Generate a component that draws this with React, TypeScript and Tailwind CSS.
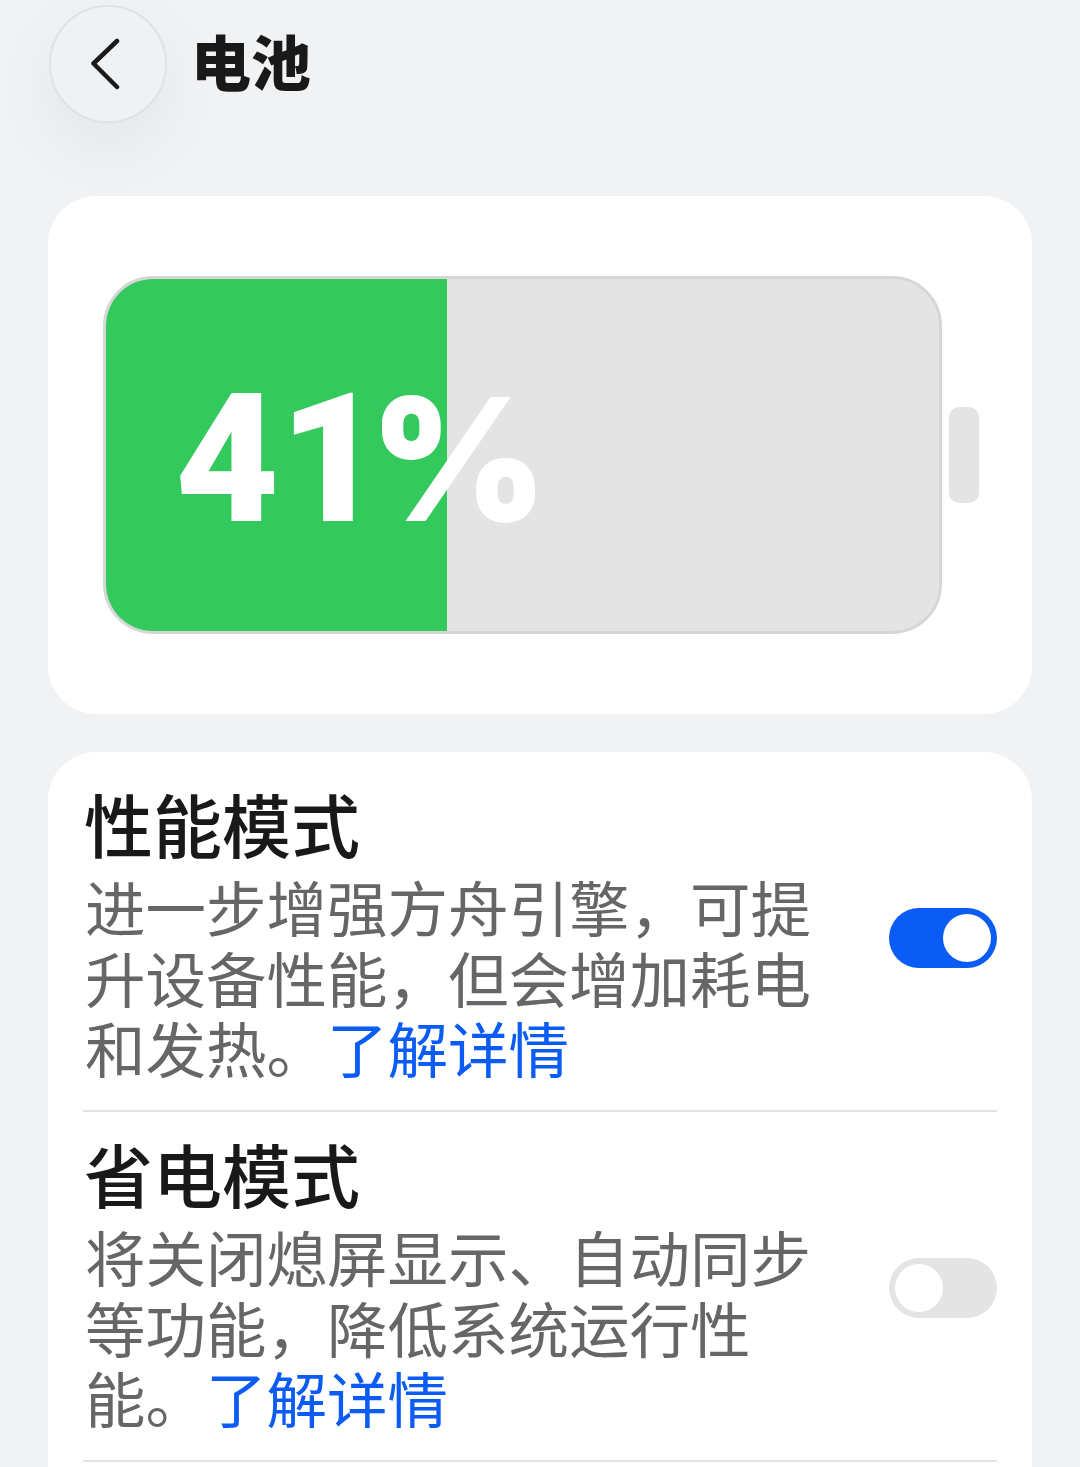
import React from "react";

const cjk = { fontFamily: '"Noto Sans CJK SC", "Noto Sans", sans-serif' };

function Toggle({ on }: { on: boolean }) {
  return (
    <div
      className={`mt-[3px] flex h-[60px] w-[108px] shrink-0 items-center rounded-full px-[6px] ${
        on ? "justify-end bg-[#0a5cf5]" : "justify-start bg-[#e4e4e4]"
      }`}
    >
      <div className="h-[48px] w-[48px] rounded-full bg-white" />
    </div>
  );
}

function SettingRow({
  title,
  text,
  on,
}: {
  title: string;
  text: string;
  on: boolean;
}) {
  return (
    <div className="flex h-[350px] items-center justify-between border-b-2 border-[#e2e3e5] pl-[2px]">
      <div className="w-[734px]">
        <h2 className="-ml-[1px] h-[70px] text-[69px] leading-[68px] font-medium text-[#191919]">
          {title}
        </h2>
        <p className="mt-[12px] text-[60.5px] leading-[70.5px] text-[#666666]">
          {text}
          <span className="text-[#0a5cf5]">了解详情</span>
        </p>
      </div>
      <Toggle on={on} />
    </div>
  );
}

export default function App() {
  return (
    <div
      className="h-[1467px] w-[1080px] overflow-hidden bg-[#f1f2f4]"
      style={cjk}
    >
      {/* Header */}
      <div className="flex items-center gap-[24px] pt-[5px] pl-[49px]">
        <button className="flex h-[118px] w-[118px] items-center justify-center rounded-full border-2 border-[#dfe2e6] bg-[#eff2f5] shadow-[0_24px_70px_rgba(0,0,0,0.06)]">
          <svg width="32" height="52" viewBox="0 0 32 52" className="mr-[6px]">
            <path
              d="M28 3 L4.5 25.5 L28 49"
              fill="none"
              stroke="#1a1a1a"
              strokeWidth="4.5"
              strokeLinecap="round"
              strokeLinejoin="round"
            />
          </svg>
        </button>
        <h1 className="mb-[8px] text-[60px] leading-[70px] font-black text-[#191919]">电池</h1>
      </div>

      {/* Battery card */}
      <div className="mx-[48px] mt-[73px] flex h-[518px] items-center gap-[7px] rounded-[48px] bg-white pl-[55px]">
        <div className="relative h-[358px] w-[839px] overflow-hidden rounded-[50px] border-[3px] border-[#d6d6d6] bg-[#e4e4e4]">
          <div className="h-full w-[341px] bg-[#34c95c]" />
          <div className="absolute top-[70px] left-[69px] flex items-baseline text-[180px] leading-[220px] font-black text-white">
            <span style={{ fontFamily: "Roboto, sans-serif" }}>41</span>
            <span
              className="-ml-[14px] text-[170px] font-black"
              style={{ fontFamily: "Inter, sans-serif" }}
            >
              %
            </span>
          </div>
        </div>
        <div className="h-[96px] w-[30px] rounded-[10px] bg-[#e4e4e4]" />
      </div>

      {/* Modes card */}
      <div className="mx-[48px] mt-[38px] h-[800px] rounded-t-[48px] bg-white px-[35px] pt-[10px]">
        <SettingRow
          title="性能模式"
          text="进一步增强方舟引擎，可提升设备性能，但会增加耗电和发热。"
          on={true}
        />
        <SettingRow
          title="省电模式"
          text="将关闭熄屏显示、自动同步等功能，降低系统运行性能。"
          on={false}
        />
      </div>
    </div>
  );
}
